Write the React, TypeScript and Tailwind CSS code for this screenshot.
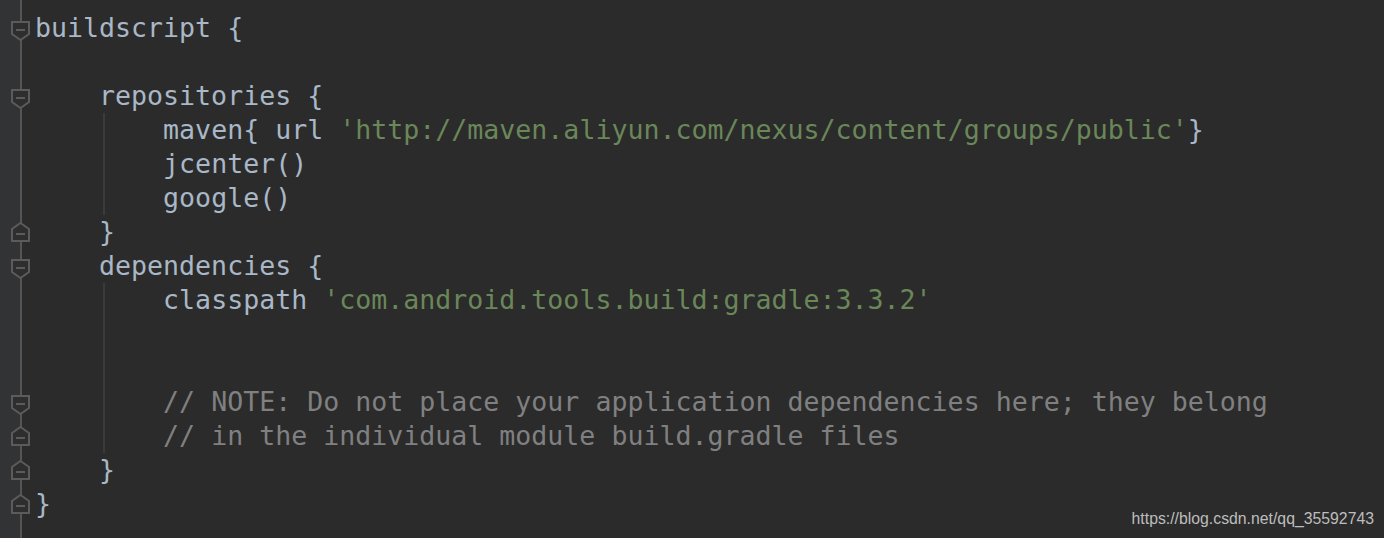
import React from "react";

type Tok = { t: string; c?: "s" | "c" };
type Line = { indent: number; toks: Tok[]; fold?: "start" | "end"; guide?: boolean };

const lines: Line[] = [
  { indent: 0, toks: [{ t: "buildscript {" }], fold: "start" },
  { indent: 0, toks: [] },
  { indent: 4, toks: [{ t: "repositories {" }], fold: "start" },
  { indent: 8, toks: [{ t: "maven{ url " }, { t: "'http://maven.aliyun.com/nexus/content/groups/public'", c: "s" }, { t: "}" }], guide: true },
  { indent: 8, toks: [{ t: "jcenter()" }], guide: true },
  { indent: 8, toks: [{ t: "google()" }], guide: true },
  { indent: 4, toks: [{ t: "}" }], fold: "end" },
  { indent: 4, toks: [{ t: "dependencies {" }], fold: "start" },
  { indent: 8, toks: [{ t: "classpath " }, { t: "'com.android.tools.build:gradle:3.3.2'", c: "s" }], guide: true },
  { indent: 0, toks: [], guide: true },
  { indent: 0, toks: [], guide: true },
  { indent: 8, toks: [{ t: "// NOTE: Do not place your application dependencies here; they belong", c: "c" }], fold: "start", guide: true },
  { indent: 8, toks: [{ t: "// in the individual module build.gradle files", c: "c" }], fold: "end", guide: true },
  { indent: 4, toks: [{ t: "}" }], fold: "end" },
  { indent: 0, toks: [{ t: "}" }], fold: "end" },
];

function FoldIcon({ kind }: { kind: "start" | "end" }) {
  return (
    <svg width="19" height="20" viewBox="0 0 19 20" className="block">
      {kind === "start" ? (
        <>
          <path d="M1 1 H18 V13 L9.5 19 L1 13 Z" fill="#2e2e2e" stroke="#5b5b5b" strokeWidth="2" />
          <path d="M5 9 H14" stroke="#5b5b5b" strokeWidth="2" />
        </>
      ) : (
        <>
          <path d="M9.5 1 L18 7 V19 H1 V7 Z" fill="#2e2e2e" stroke="#5b5b5b" strokeWidth="2" />
          <path d="M5 12 H14" stroke="#5b5b5b" strokeWidth="2" />
        </>
      )}
    </svg>
  );
}

export default function App() {
  return (
    <div className="relative h-[538px] w-full overflow-hidden bg-[#2b2b2b] flex">
      <div className="relative w-[35px] shrink-0 h-full">
        <div className="absolute inset-y-0 left-0 w-[20px] bg-[#313335]" />
        <div className="absolute inset-y-0 left-[20px] w-[2px] bg-[#555555]" />
        <div className="relative pt-[11px] flex flex-col">
          {lines.map((l, i) => (
            <div
              key={i}
              className={
                "h-[34px] flex pl-[11px] " +
                (l.fold === "start" ? "pt-[10px]" : l.fold === "end" ? "pt-[7px]" : "")
              }
            >
              {l.fold && <FoldIcon kind={l.fold} />}
            </div>
          ))}
        </div>
      </div>
      <div
        className="pt-[11px] flex flex-col text-[26.6px] leading-[34px] text-[#a9b7c6] whitespace-pre"
        style={{ fontFamily: '"DejaVu Sans Mono", monospace' }}
      >
        {lines.map((l, i) => (
          <div key={i} className="h-[34px] relative">
            {l.guide && <div className="absolute inset-y-0 left-[68px] w-[2px] bg-[#3b3b3b]" />}
            <span>{" ".repeat(l.indent)}</span>
            {l.toks.map((t, j) => (
              <span key={j} className={t.c === "s" ? "text-[#6a8759]" : t.c === "c" ? "text-[#808080]" : ""}>
                {t.t}
              </span>
            ))}
          </div>
        ))}
      </div>
      <div
        className="absolute right-[10px] bottom-[9px] text-[15.8px] leading-[20px] text-[#bdbdbd]"
        style={{ fontFamily: '"Liberation Sans", Arial, sans-serif' }}
      >
        https://blog.csdn.net/qq_35592743
      </div>
    </div>
  );
}
